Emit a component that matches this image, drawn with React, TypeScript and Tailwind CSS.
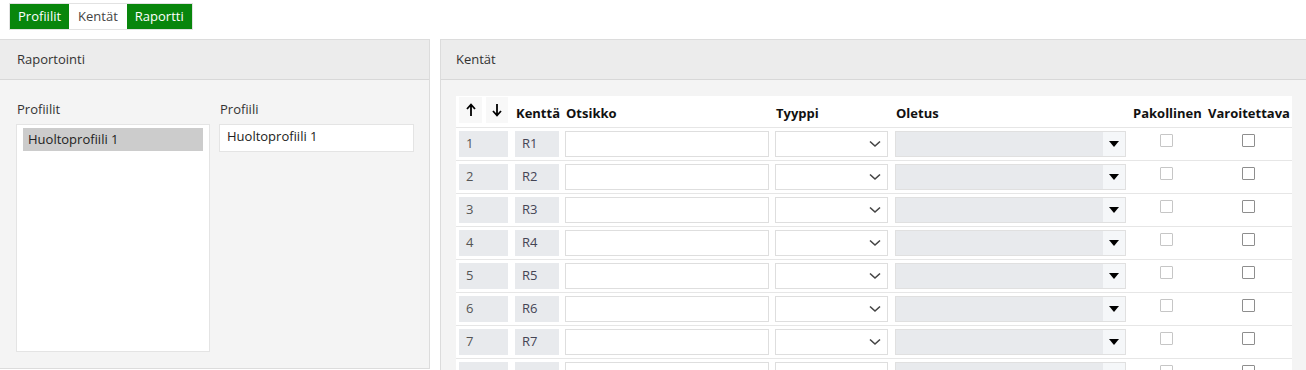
import React from "react";

const rows = [1, 2, 3, 4, 5, 6, 7, 8];

function Chevron() {
  return (
    <svg width="12" height="8" viewBox="0 0 12 8" className="text-[#444]">
      <path d="M1 1.5 L6 6 L11 1.5" fill="none" stroke="currentColor" strokeWidth="1.6" />
    </svg>
  );
}

function Arrow({ down }: { down?: boolean }) {
  return (
    <svg width="10" height="14" viewBox="0 0 10 14" className="text-black">
      {down ? (
        <path d="M5 1 V12 M1 8 L5 12.5 L9 8" fill="none" stroke="currentColor" strokeWidth="1.8" />
      ) : (
        <path d="M5 13 V2 M1 6 L5 1.5 L9 6" fill="none" stroke="currentColor" strokeWidth="1.8" />
      )}
    </svg>
  );
}

export default function App() {
  return (
    <div className="w-[1306px] h-[370px] overflow-hidden bg-white text-[13px] text-[#333]" style={{ fontFamily: '"Open Sans", sans-serif' }}>
      <div className="flex pl-[9px] pt-[3px] h-[39px]">
        <div className="flex h-[27px] border border-[#e2e2e2]">
          <div className="bg-[#08860c] text-white px-[8px] flex items-center">Profiilit</div>
          <div className="bg-white text-[#444] px-[9px] flex items-center">Kentät</div>
          <div className="bg-[#08860c] text-white px-[8px] flex items-center">Raportti</div>
        </div>
      </div>
      <div className="flex gap-[10px]">
        <div className="w-[430px] h-[330px] border border-[#dcdcdc] border-l-0 bg-[#f4f4f4] flex flex-col">
          <div className="h-[40px] shrink-0 bg-[#ececec] border-b border-[#d8d8d8] flex items-center pl-[17px] text-[13px] text-[#333]">Raportointi</div>
          <div className="flex pl-[16px] pt-[20px] gap-[9px]">
            <div className="flex flex-col">
              <div className="pl-[1px] h-[24px] text-[#333]">Profiilit</div>
              <div className="w-[194px] h-[228px] bg-white border border-[#e4e4e4] pt-[3px] pl-[6px] pr-[6px]">
                <div className="h-[23px] bg-[#cccccc] text-[#222] flex items-center pl-[5px] text-[13px]">Huoltoprofiili 1</div>
              </div>
            </div>
            <div className="flex flex-col">
              <div className="pl-[1px] h-[24px] text-[#333]">Profiili</div>
              <div className="w-[195px] h-[28px] bg-white border border-[#e4e4e4] flex items-center pl-[7px] pb-[2px] text-[#222]">Huoltoprofiili 1</div>
            </div>
          </div>
        </div>
        <div className="flex-1 h-[331px] overflow-hidden border border-[#dcdcdc] border-r-0 border-b-0 bg-[#f4f4f4] flex flex-col">
          <div className="h-[40px] shrink-0 bg-[#ececec] border-b border-[#d8d8d8] flex items-center pl-[15px] text-[#333]">Kentät</div>
          <div className="pl-[15px] pt-[16px] shrink-0">
            <div className="w-[836px] bg-white">
              <div className="grid grid-cols-[56px_50px_210px_120px_238px_76px_86px] h-[32px] border-b border-[#e6e6e6] font-bold text-[#111]">
                <div className="flex gap-[4px] pl-[3px] pt-[1px]">
                  <div className="w-[23px] h-[26px] bg-[#f8f8f8] flex items-center justify-center"><Arrow /></div>
                  <div className="w-[22px] h-[26px] bg-[#f8f8f8] flex items-center justify-center"><Arrow down /></div>
                </div>
                <div className="pl-[4px] pt-[8px]">Kenttä</div>
                <div className="pl-[4px] pt-[8px]">Otsikko</div>
                <div className="pl-[4px] pt-[8px]">Tyyppi</div>
                <div className="pl-[4px] pt-[8px]">Oletus</div>
                <div className="pl-[3px] pt-[8px]">Pakollinen</div>
                <div className="pl-[2px] pt-[8px]">Varoitettava</div>
              </div>
              {rows.map((n) => (
                <div key={n} className="grid grid-cols-[56px_50px_210px_120px_238px_76px_86px] h-[33px] border-b border-[#e6e6e6] py-[3px] text-[#555]">
                  <div className="pl-[3px] pr-[4px]">
                    <div className="h-[26px] bg-[#e8eaed] flex items-center pl-[7px]">{n}</div>
                  </div>
                  <div className="pl-[3px] pr-[3px]">
                    <div className="h-[26px] bg-[#e8eaed] flex items-center pl-[7px] text-[#445]">R{n}</div>
                  </div>
                  <div className="pl-[3px] pr-[3px]">
                    <div className="h-[26px] bg-white border border-[#dedede]"></div>
                  </div>
                  <div className="pl-[3px] pr-[4px]">
                    <div className="h-[26px] bg-white border border-[#dedede] flex items-center justify-end pr-[6px]"><Chevron /></div>
                  </div>
                  <div className="pl-[3px] pr-[4px]">
                    <div className="h-[26px] border border-[#e0e0e0] flex">
                      <div className="flex-1 bg-[#e8eaed]"></div>
                      <div className="w-[22px] bg-[#f5f7f9] flex items-center justify-center">
                        <svg width="10" height="6" viewBox="0 0 10 6"><path d="M0 0 H10 L5 6 Z" fill="#000" /></svg>
                      </div>
                    </div>
                  </div>
                  <div className="flex justify-start pl-[30px] pt-[3px]">
                    <div className="w-[13px] h-[13px] border border-[#c6c6c6] rounded-[1px] bg-white"></div>
                  </div>
                  <div className="flex justify-start pl-[36px] pt-[3px]">
                    <div className="w-[13px] h-[13px] border border-[#8e8e8e] rounded-[1px] bg-white"></div>
                  </div>
                </div>
              ))}
            </div>
          </div>
        </div>
      </div>
    </div>
  );
}
